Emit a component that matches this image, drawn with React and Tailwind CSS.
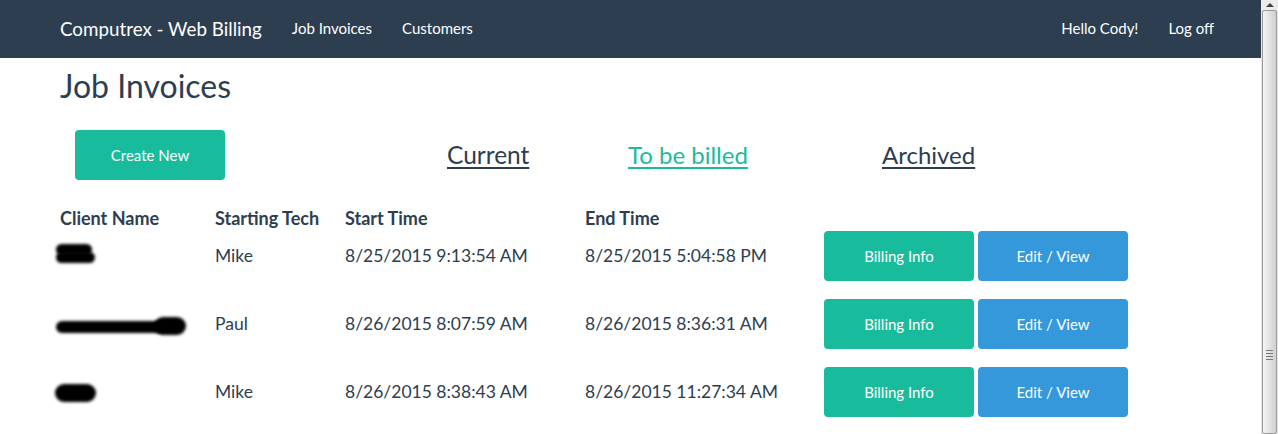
export default function App() {
  const rows = [
    { tech: "Mike", start: "8/25/2015 9:13:54 AM", end: "8/25/2015 5:04:58 PM", blob: 1 },
    { tech: "Paul", start: "8/26/2015 8:07:59 AM", end: "8/26/2015 8:36:31 AM", blob: 2 },
    { tech: "Mike", start: "8/26/2015 8:38:43 AM", end: "8/26/2015 11:27:34 AM", blob: 3 },
  ];

  const Blob = ({ kind }) => {
    if (kind === 1)
      return (
        <div className="ml-[-4px] mt-[-6px] flex flex-col">
          <div className="h-[11px] w-[36px] rounded-full bg-black blur-[1.5px]" />
          <div className="mt-[-3px] h-[11px] w-[39px] rounded-full bg-black blur-[1.5px]" />
        </div>
      );
    if (kind === 2)
      return (
        <div className="ml-[-4px] mt-[6px] flex items-center">
          <div className="h-[12px] w-[110px] rounded-full bg-black blur-[1.5px]" />
          <div className="ml-[-12px] mt-[-2px] h-[18px] w-[32px] rounded-full bg-black blur-[1.5px]" />
        </div>
      );
    return (
      <div className="ml-[-5px] mt-[1px] h-[18px] w-[41px] rounded-full bg-black blur-[1.5px]" />
    );
  };

  return (
    <div className="flex h-[434px] w-[1278px] overflow-hidden bg-white font-['Lato','Liberation_Sans',sans-serif] text-[#2c3e50]">
      <div className="w-[1261px] shrink-0">
        {/* Navbar */}
        <nav className="h-[58px] bg-[#2c3e50] text-white">
          <div className="ml-[60px] flex h-full w-[1140px] items-center pb-[2px]">
            <span className="text-[18.8px] leading-[21px]">Computrex - Web Billing</span>
            <div className="ml-[15px] flex">
              <span className="px-[15px] text-[15px] leading-[21px]">Job Invoices</span>
              <span className="px-[15px] text-[15px] leading-[21px]">Customers</span>
            </div>
            <div className="ml-auto mr-[-29px] flex">
              <span className="px-[15px] text-[15px] leading-[21px]">Hello Cody!</span>
              <span className="px-[15px] text-[15px] leading-[21px]">Log off</span>
            </div>
          </div>
        </nav>

        <div className="ml-[60px] w-[1140px]">
          <h2 className="mt-[11px] text-[32px] leading-[34px]">Job Invoices</h2>

          {/* Tabs row */}
          <div className="mt-[27px] flex h-[50px] items-center">
            <div className="w-[387px]">
              <button className="ml-[15px] flex h-[50px] w-[150px] items-center justify-center rounded-[4px] bg-[#18bc9c] text-[15px] text-white">
                Create New
              </button>
            </div>
            <div className="w-[181px] pt-[2px]">
              <a className="text-[24.5px] leading-[26px] text-[#2c3e50] underline underline-offset-[3px] decoration-[2px]">Current</a>
            </div>
            <div className="w-[254px] pt-[2px]">
              <a className="text-[24px] leading-[26px] text-[#18bc9c] underline underline-offset-[3px] decoration-[2px]">To be billed</a>
            </div>
            <div className="pt-[2px]">
              <a className="text-[24px] leading-[26px] text-[#2c3e50] underline underline-offset-[3px] decoration-[2px]">Archived</a>
            </div>
          </div>

          {/* Table */}
          <div className="grid h-[42px] grid-cols-[155px_130px_240px_239px_1fr] pt-[27px] text-[18px] font-bold leading-[22px]">
            <div>Client Name</div>
            <div>Starting Tech</div>
            <div>Start Time</div>
            <div>End Time</div>
            <div />
          </div>
          {rows.map((r, i) => (
            <div
              key={i}
              className="grid h-[68px] grid-cols-[155px_130px_240px_239px_1fr] items-center text-[17.5px] leading-[22px]"
            >
              <div>
                <Blob kind={r.blob} />
              </div>
              <div>{r.tech}</div>
              <div>{r.start}</div>
              <div>{r.end}</div>
              <div className="flex gap-[4px]">
                <button className="flex h-[50px] w-[150px] items-center justify-center rounded-[4px] bg-[#18bc9c] text-[15px] text-white">
                  Billing Info
                </button>
                <button className="flex h-[50px] w-[150px] items-center justify-center rounded-[4px] bg-[#3498db] text-[15px] text-white">
                  Edit / View
                </button>
              </div>
            </div>
          ))}
        </div>
      </div>

      {/* Scrollbar */}
      <div className="flex w-[17px] shrink-0 flex-col bg-[#e8e8e8]">
        <div className="flex h-[17px] items-center justify-center bg-[#ececec]">
          <div className="h-0 w-0 border-x-[4px] border-b-[4px] border-x-transparent border-b-[#404040]" />
        </div>
        <div className="mx-[1px] flex h-[700px] items-start justify-center rounded-[2px] border border-[#9a9a9a] bg-[linear-gradient(to_right,#f4f4f4,#e4e4e4_45%,#cfcfcf)]">
          <div className="mt-[339px] flex flex-col gap-[2px]">
            <div className="h-px w-[7px] bg-[#777]" />
            <div className="h-px w-[7px] bg-[#777]" />
            <div className="h-px w-[7px] bg-[#777]" />
            <div className="h-px w-[7px] bg-[#777]" />
          </div>
        </div>
      </div>
    </div>
  );
}
